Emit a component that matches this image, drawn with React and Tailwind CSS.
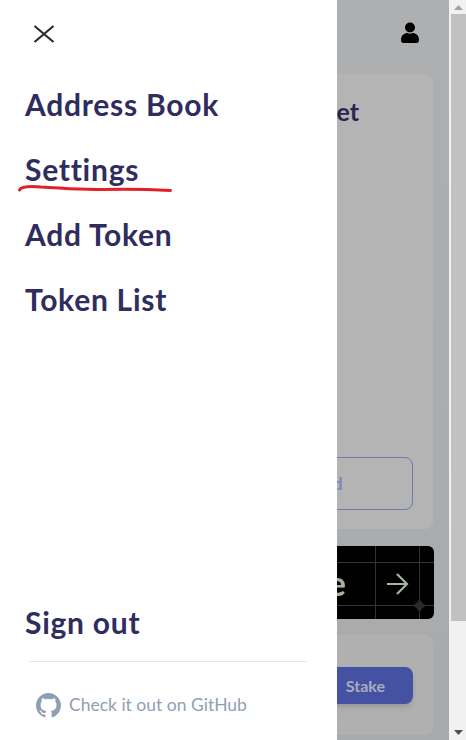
import React from "react";

function NavItem({ children }) {
  return (
    <a className="block h-[65px] pl-[25px] pt-[11px] text-[30px] leading-[40px] font-bold tracking-[0.75px] text-[#2f2c5e]">
      {children}
    </a>
  );
}

export default function App() {
  return (
    <div className="flex h-[740px] w-[466px] overflow-hidden bg-white font-['Lato',sans-serif]">
      <aside className="relative z-10 flex h-full w-[337px] shrink-0 flex-col bg-white">
        <div className="flex h-[73px] items-start pl-[33px] pt-[24px]">
          <svg width="22" height="20" viewBox="0 0 22 20" fill="none" stroke="#2b2b2b" strokeWidth="2.2">
            <path d="M1.500 2 L20.500 18 M20.500 2 L1.500 18" />
          </svg>
        </div>
        <nav className="flex flex-col">
          <NavItem>Address Book</NavItem>
          <NavItem>Settings</NavItem>
          <NavItem>Add Token</NavItem>
          <NavItem>Token List</NavItem>
        </nav>
        <div className="mt-auto">
          <a className="block pl-[25px] text-[30px] leading-[40px] font-bold tracking-[0.75px] text-[#2f2c5e]">Sign out</a>
          <div className="ml-[29px] mr-[30px] mt-[19px] border-t border-[#e4e4e7]" />
          <div className="flex h-[78px] items-center gap-[8px] pl-[36px] pt-[8px] text-[17.500px] text-[#8f9fb3]">
            <svg width="25" height="25" viewBox="0 0 16 16" fill="#8f9fb3">
              <path d="M8 0C3.58 0 0 3.58 0 8c0 3.54 2.29 6.53 5.47 7.59.4.07.55-.17.55-.38 0-.19-.01-.82-.01-1.49-2.01.37-2.53-.49-2.69-.94-.09-.23-.48-.94-.82-1.13-.28-.15-.68-.52-.01-.53.63-.01 1.08.58 1.23.82.72 1.21 1.87.87 2.33.66.07-.52.28-.87.51-1.07-1.78-.2-3.64-.89-3.64-3.95 0-.87.31-1.59.82-2.15-.08-.2-.36-1.02.08-2.12 0 0 .67-.21 2.2.82.64-.18 1.32-.27 2-.27.68 0 1.36.09 2 .27 1.53-1.04 2.2-.82 2.2-.82.44 1.1.16 1.92.08 2.12.51.56.82 1.27.82 2.15 0 3.07-1.87 3.75-3.65 3.95.29.25.54.73.54 1.48 0 1.07-.01 1.93-.01 2.2 0 .21.15.46.55.38A8.013 8.013 0 0016 8c0-4.42-3.58-8-8-8z" />
            </svg>
            <span>Check it out on GitHub</span>
          </div>
        </div>
        <svg className="absolute left-[17px] top-[183px]" width="157" height="12" viewBox="0 0 157 12" fill="none" stroke="#e3202a" strokeWidth="3" strokeLinecap="round">
          <path d="M2.500 7 C4 4 12 3 24 4 C45 5 60 7 85 6.500 C110 6 135 6.500 153.500 7.500" />
        </svg>
      </aside>

      <main className="flex h-full w-[112px] shrink-0 flex-col items-end overflow-hidden bg-gradient-to-b from-[#aeafb1] to-[#a9aaac]">
        <div className="flex h-[74px] w-full items-start justify-end pr-[30px] pt-[22px]">
          <svg width="18" height="21" viewBox="0 0 18 21" fill="#000">
            <circle cx="9" cy="5.500" r="5" />
            <path d="M0 18 C0 13 3.500 11 6.500 11 C7.500 11.500 8 11.700 9 11.700 C10 11.700 10.500 11.500 11.500 11 C14.500 11 18 13 18 18 C18 20 17 21 15.500 21 L2.500 21 C1 21 0 20 0 18 Z" />
          </svg>
        </div>
        <section className="mr-4 h-[455px] w-[160px] shrink-0 rounded-lg bg-[#b4b4b4] pl-2 pr-5 pt-[21px]">
          <div className="flex h-full flex-col items-end">
            <div className="w-full whitespace-nowrap pr-[54px] text-right text-[25px] leading-[32px] font-bold text-[#28264f]">Wallet</div>
            <div className="mb-[19px] mt-auto flex h-[53px] w-[120px] items-center justify-start rounded-lg border border-[#6f79b6] pl-[9px] text-[18px] font-semibold text-[#7983bd]">
              Send
            </div>
          </div>
        </section>
        <section className="relative mr-[15px] mt-[17px] h-[73px] w-[160px] shrink-0 overflow-hidden rounded-md bg-black">
          <svg className="absolute inset-0" width="160" height="73" viewBox="0 0 160 73" fill="none">
            <path d="M101.500 0V73M145.500 0V73M0 16.500H160M0 59.500H160" stroke="#333" />
            <path d="M145.500 52 Q147.500 57.500 152.500 59.500 Q147.500 61.500 145.500 67 Q143.500 61.500 138.500 59.500 Q143.500 57.500 145.500 52Z" fill="#2a2a2a" />
            <path d="M113 38H133M123 28L133 38L123 48" stroke="#a5b3a0" strokeWidth="2.200" />
          </svg>
          <div className="absolute right-[88px] top-[17px] whitespace-nowrap text-[34px] leading-[40px] font-bold text-[#a5b3a0]">Trade</div>
        </section>
        <section className="mr-4 mt-4 flex h-[100px] w-[160px] shrink-0 items-start justify-end rounded-lg bg-[#b0b0b0] pr-5 pt-[32px]">
          <div className="flex h-[37px] w-[120px] items-center justify-end rounded-lg bg-[#4551a3] pr-[28px] text-[16px] font-bold text-[#a9adc0] shadow-md">
            Stake
          </div>
        </section>
      </main>

      <div className="flex h-full w-[17px] flex-col items-end bg-[#f1f1f1]">
        <div className="flex h-[14px] w-[15px] items-center justify-center">
          <svg width="9" height="5" viewBox="0 0 9 5"><path d="M4.500 0L9 5H0Z" fill="#a3a3a3" /></svg>
        </div>
        <div className="h-[607px] w-[15px] bg-[#c1c1c1]" />
        <div className="mt-auto flex h-[16px] w-[15px] items-center justify-center">
          <svg width="9" height="5" viewBox="0 0 9 5"><path d="M0 0H9L4.500 5Z" fill="#505050" /></svg>
        </div>
      </div>
    </div>
  );
}
